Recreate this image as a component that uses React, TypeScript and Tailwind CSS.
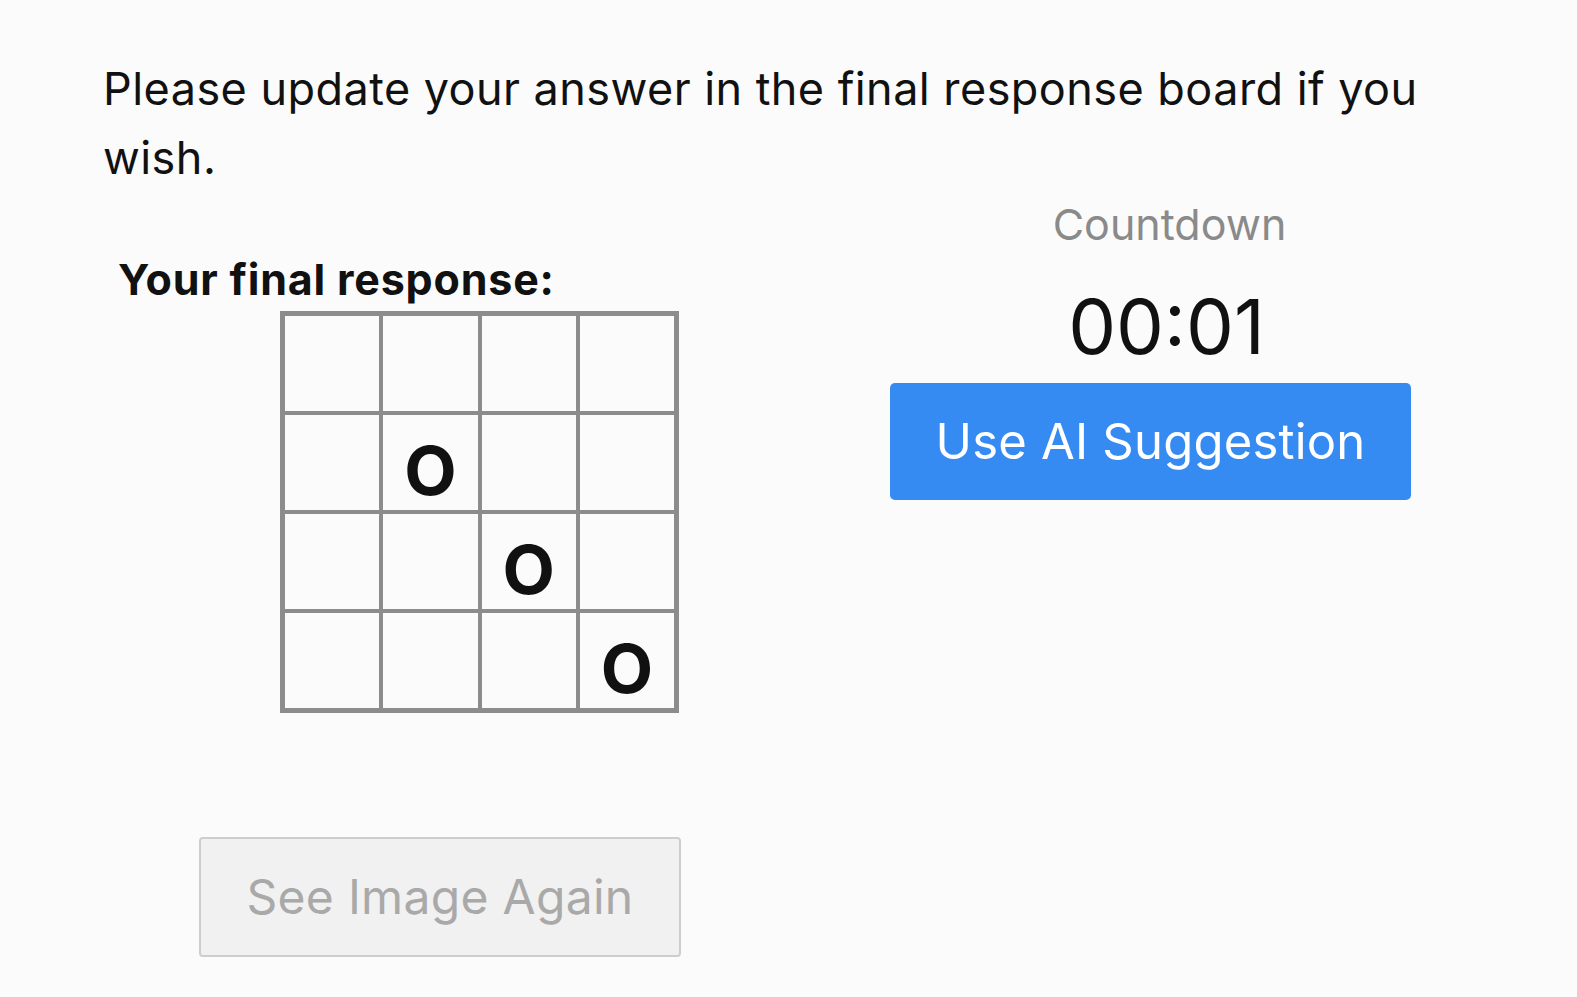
import React from 'react';

// Final response board with countdown and AI suggestion
const board: string[][] = [
  ['', '', '', ''],
  ['', 'O', '', ''],
  ['', '', 'O', ''],
  ['', '', '', 'O'],
];

export default function App() {
  return (
    <div className="min-h-screen w-full bg-[#fbfbfb] text-[#111] font-['Inter','Liberation_Sans',Arial,sans-serif]">
      <div className="pl-[103px] pr-[120px] pt-[54px]">
        <p className="text-[45px] leading-[69px] tracking-[0.45px]">
          Please update your answer in the final response board if you wish.
        </p>

        <div className="flex">
          {/* ── Left: final response board ── */}
          <div className="w-[600px] shrink-0">
            <div className="ml-[15px] mt-[63px] text-[43px] font-bold leading-[48px] tracking-[0.8px]">
              Your final response:
            </div>
            <div className="ml-[177px] mt-[8px] grid w-[399px] grid-cols-4 border-[3px] border-[#8c8c8c]">
              {board.flat().map((v, i) => (
                <div
                  key={i}
                  className="flex h-[99px] items-center justify-center border-[2px] border-[#8c8c8c] pt-[14px] text-[68px] font-bold leading-none"
                >
                  {v}
                </div>
              ))}
            </div>
            <button className="ml-[96px] mt-[124px] h-[120px] w-[482px] rounded-[4px] border-2 border-[#cdcdcd] bg-[#f1f1f1] text-[48px] tracking-[0.3px] text-[#a9a9a9]">
              See Image Again
            </button>
          </div>

          {/* ── Right: countdown & suggestion ── */}
          <div className="ml-[187px] w-[521px] shrink-0">
            <div className="mt-[4px] pl-[38px] text-center text-[43px] leading-[56px] text-[#8a8a8a]">
              Countdown
            </div>
            <div className="mt-[34px] pl-[32px] text-center text-[76px] leading-[80px] text-[#111]">
              00:01
            </div>
            <button className="mt-[17px] h-[117px] w-[521px] rounded-[5px] bg-[#368bf2] text-[49px] tracking-[0.2px] text-white">
              Use AI Suggestion
            </button>
          </div>
        </div>
      </div>
    </div>
  );
}
